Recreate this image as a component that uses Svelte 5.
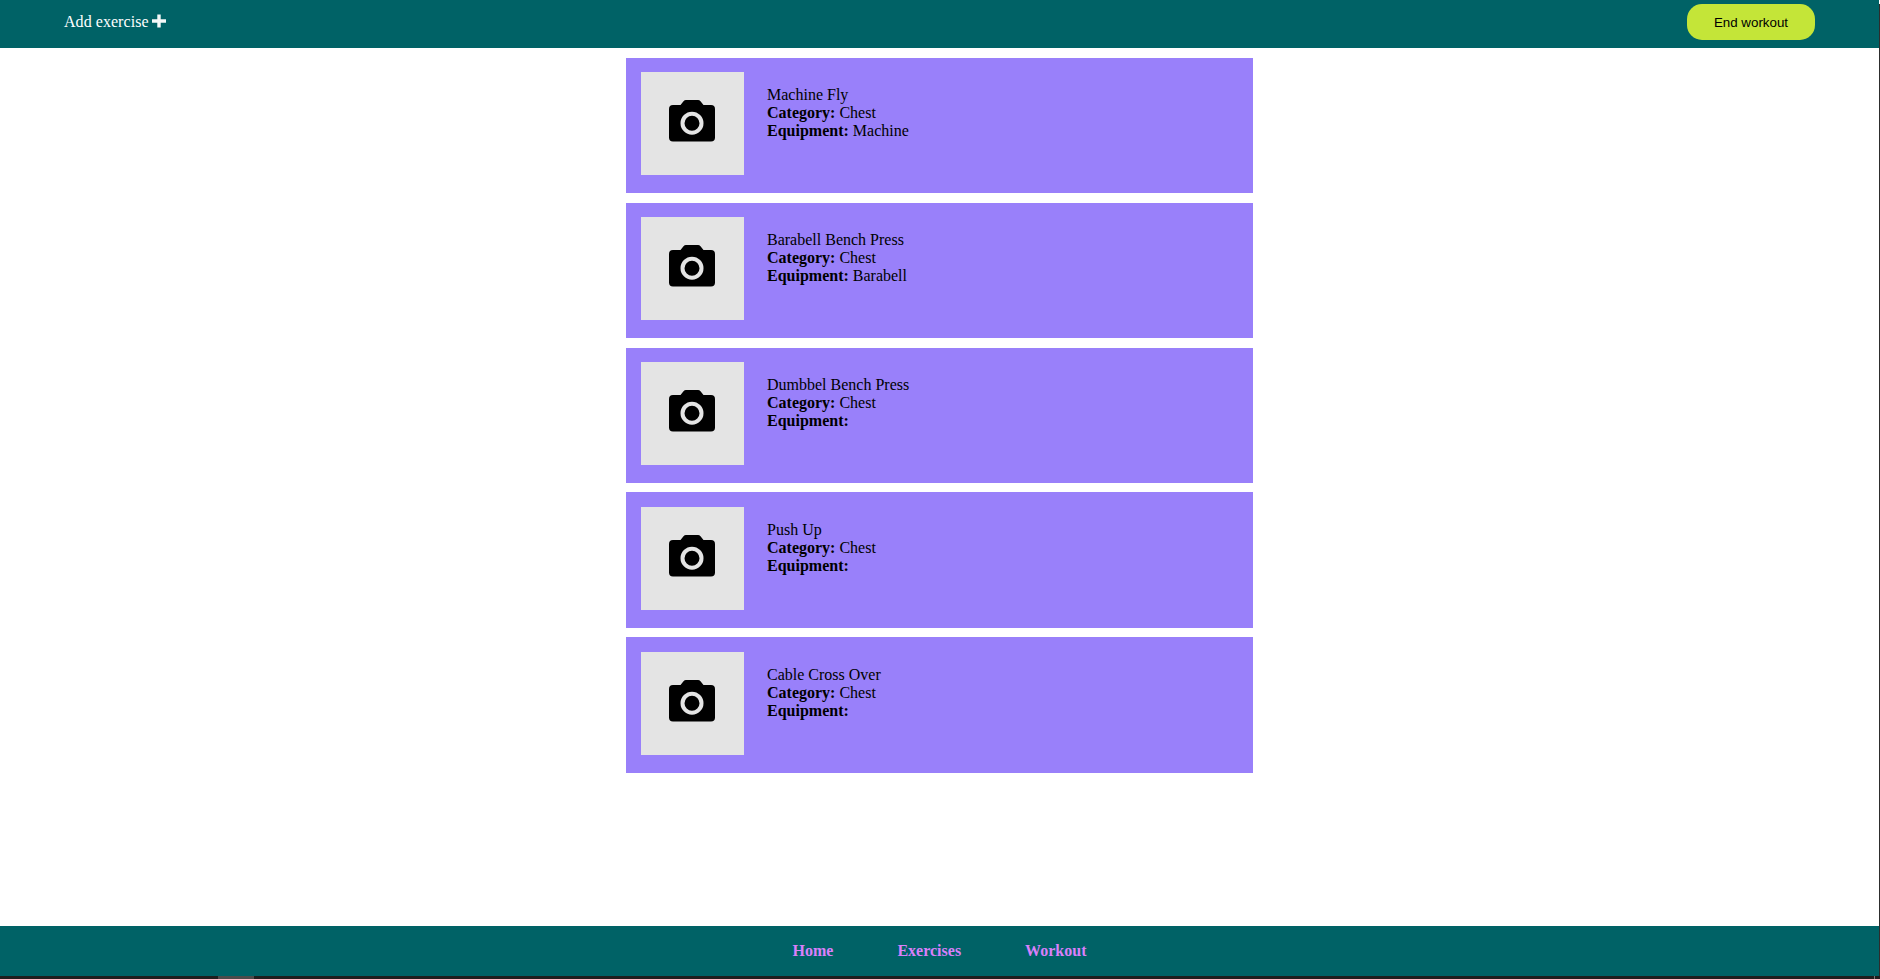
<script>
  const exercises = [
    { name: 'Machine Fly', category: 'Chest', equipment: 'Machine' },
    { name: 'Barabell Bench Press', category: 'Chest', equipment: 'Barabell' },
    { name: 'Dumbbel Bench Press', category: 'Chest', equipment: '' },
    { name: 'Push Up', category: 'Chest', equipment: '' },
    { name: 'Cable Cross Over', category: 'Chest', equipment: '' }
  ];
  const links = ['Home', 'Exercises', 'Workout'];
</script>

<div class="screen">
  <div class="page">
    <header>
      <div class="add">
        <span>Add exercise</span>
        <svg width="14" height="14" viewBox="0 0 14 14"><path d="M5.3 0.5h3.4v4.8H14v3.4H8.7v4.8H5.3V8.7H0V5.3h5.3z" fill="#f4f8f8" /></svg>
      </div>
      <button>End workout</button>
    </header>
    <main>
      {#each exercises as e}
        <article>
          <div class="photo">
            <svg width="46" height="42" viewBox="0 0 46 42">
              <path d="M4 5H11.500L14.500 1.200Q15.500 0 17 0H29Q30.500 0 31.500 1.200L34.500 5H42Q46 5 46 9V37.500Q46 41.500 42 41.500H4Q0 41.500 0 37.500V9Q0 5 4 5Z" fill="#000" />
              <circle cx="23" cy="23.200" r="9.500" fill="none" stroke="#e4e4e4" stroke-width="4" />
            </svg>
          </div>
          <div class="info">
            <div>{e.name}</div>
            <div><b>Category:</b> {e.category}</div>
            <div><b>Equipment:</b> {e.equipment}</div>
          </div>
        </article>
      {/each}
    </main>
    <footer>
      {#each links as link}<a href="#top">{link}</a>{/each}
    </footer>
  </div>
  <div class="edge"></div>
  <div class="taskbar"><span class="active"></span><span class="divider"></span></div>
</div>

<style>
  :global(body) { margin: 0; background: #fff; overflow: hidden; }
  .screen {
    display: grid;
    grid-template: 976px 3px / 1879px 1px;
    font: 16px/18px "Liberation Serif", "Times New Roman", serif;
    color: #000;
  }
  .page { display: flex; flex-direction: column; background: #fff; }
  header {
    box-sizing: border-box;
    height: 48px;
    padding: 4px 64px 0;
    display: flex;
    justify-content: space-between;
    align-items: flex-start;
    background: #006266;
    color: #fff;
  }
  .add { display: flex; gap: 3.5px; padding-top: 9px; letter-spacing: 0.05px; }
  .add svg { margin-top: 1px; }
  button {
    width: 128px;
    height: 36px;
    padding: 0;
    border: 0;
    border-radius: 15px;
    background: #c4e538;
    color: #000;
    font: 13.333px "Liberation Sans", Arial, sans-serif;
  }
  main {
    flex: 1;
    display: flex;
    flex-direction: column;
    align-items: center;
    gap: 9.44px;
    padding-top: 9.9px;
  }
  article {
    box-sizing: border-box;
    width: 626.33px;
    height: 135.4px;
    padding: 14.5px 14.7px 0;
    display: flex;
    gap: 23px;
    background: #9980fa;
  }
  .photo {
    width: 103px;
    height: 103px;
    background: #e4e4e4;
  }
  .photo svg { display: block; margin: 28px 0 0 28px; }
  .info { padding-top: 14px; }
  footer {
    height: 50px;
    display: flex;
    justify-content: center;
    align-items: center;
    gap: 64px;
    background: #006266;
  }
  footer a { color: #d980fa; font-weight: bold; text-decoration: none; }
  .edge { margin-top: 4px; background: #2d2d2d; }
  .taskbar { grid-column: 1 / 3; display: flex; background: #1e1e1e; }
  .active { width: 36px; margin-left: 218px; background: #4b4b4b; }
  .divider { width: 1px; margin-left: 1620px; background: #777; }
</style>
